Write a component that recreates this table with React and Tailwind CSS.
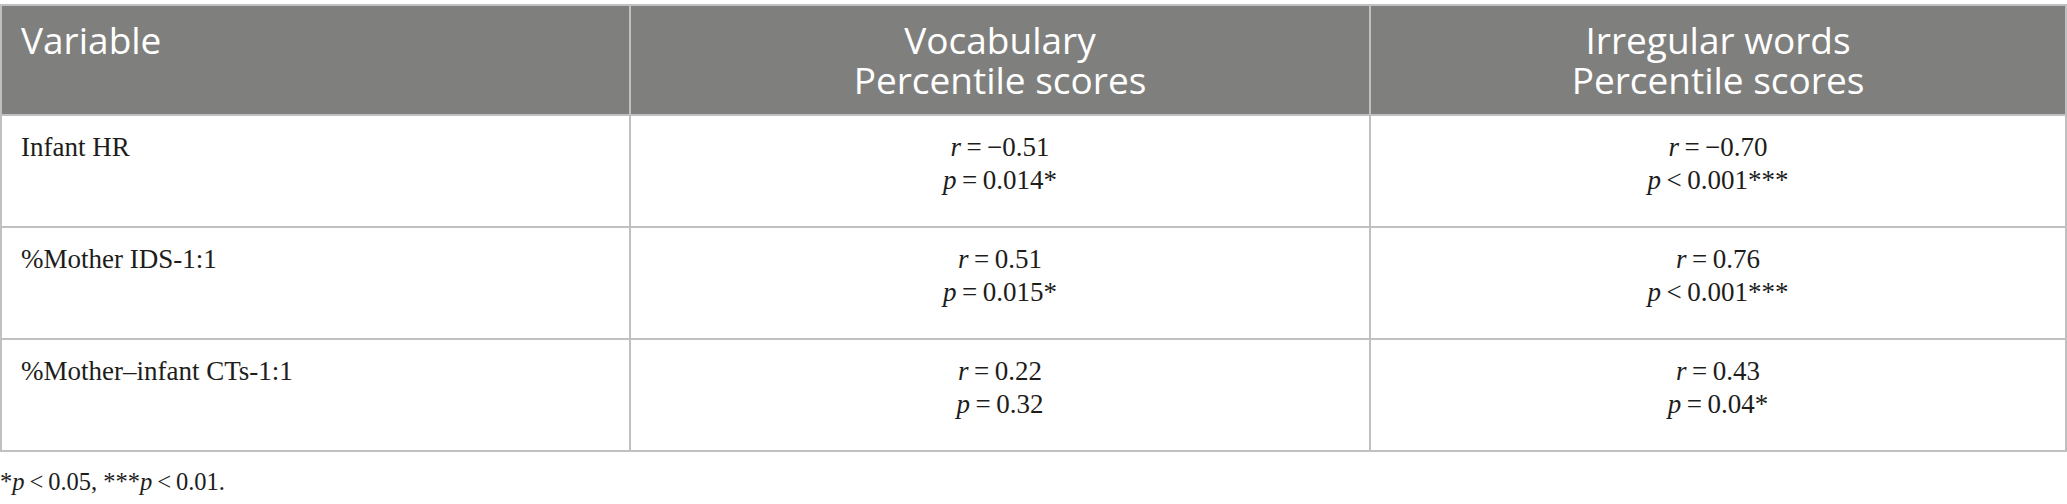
const rows = [
  {
    label: "Infant HR",
    vocab: { r: "\u22120.51", op: "=", p: "0.014*" },
    irregular: { r: "\u22120.70", op: "<", p: "0.001***" },
  },
  {
    label: "%Mother IDS-1:1",
    vocab: { r: "0.51", op: "=", p: "0.015*" },
    irregular: { r: "0.76", op: "<", p: "0.001***" },
  },
  {
    label: "%Mother\u2013infant CTs-1:1",
    vocab: { r: "0.22", op: "=", p: "0.32" },
    irregular: { r: "0.43", op: "=", p: "0.04*" },
  },
];

function Stat({ value }) {
  return (
    <>
      <div>
        <i>r</i>
        {"\u2009=\u2009"}
        {value.r}
      </div>
      <div>
        <i>p</i>
        {"\u2009" + value.op + "\u2009"}
        {value.p}
      </div>
    </>
  );
}

export default function App() {
  const head =
    "border-2 border-[#c0c0c0] bg-[#7f807e] text-white font-normal text-[37px] leading-[40px] pt-[14px] pb-[14px] align-top font-['Open_Sans',sans-serif]";
  const cell =
    "border-2 border-[#c0c0c0] text-[27px] leading-[33px] pt-[15px] pb-[29px] align-top";

  return (
    <div className="w-[2067px] h-[504px] bg-white pt-[4px] font-['Liberation_Serif',serif] text-[#1d1d1b]">
      <table className="w-full table-fixed border-collapse">
        <colgroup>
          <col className="w-[629px]" />
          <col className="w-[740px]" />
          <col />
        </colgroup>
        <thead>
          <tr>
            <th className={head + " text-left pl-[19px]"}>Variable</th>
            <th className={head + " text-center"}>
              Vocabulary
              <br />
              Percentile scores
            </th>
            <th className={head + " text-center"}>
              Irregular words
              <br />
              Percentile scores
            </th>
          </tr>
        </thead>
        <tbody>
          {rows.map((row) => (
            <tr key={row.label}>
              <td className={cell + " text-left pl-[19px]"}>{row.label}</td>
              <td className={cell + " text-center"}>
                <Stat value={row.vocab} />
              </td>
              <td className={cell + " text-center"}>
                <Stat value={row.irregular} />
              </td>
            </tr>
          ))}
        </tbody>
      </table>
      <p className="mt-[15px] text-[24.5px] leading-[30px]">
        *<i>p</i>
        {"\u2009<\u2009"}0.05, ***<i>p</i>
        {"\u2009<\u2009"}0.01.
      </p>
    </div>
  );
}
